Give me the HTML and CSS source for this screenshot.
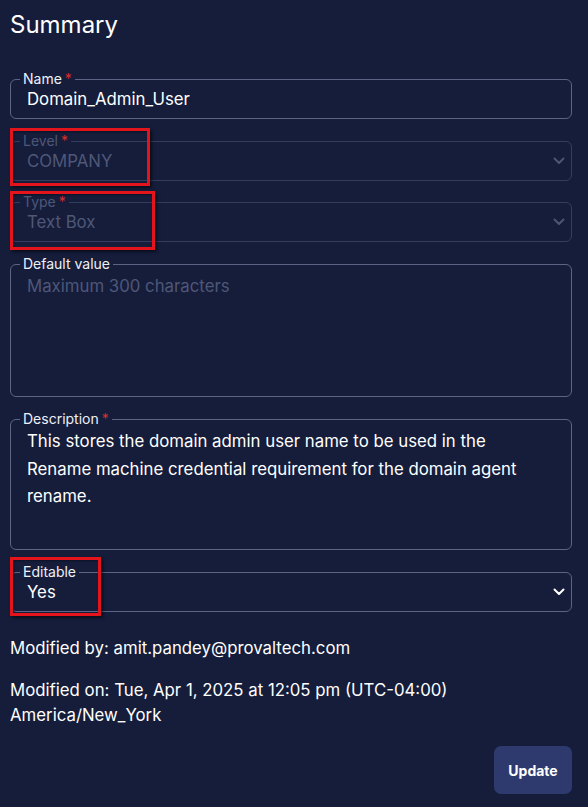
FILE: index.html
```html
<!DOCTYPE html>
<html>
<head>
<meta charset="utf-8">
<link rel="stylesheet" href="styles.css">
</head>
<body>
<div class="page">
  <h1 class="title">Summary</h1>

  <div class="field">
    <fieldset class="box">
      <legend class="label">Name<span class="req">*</span></legend>
      <div class="value">Domain_Admin_User</div>
    </fieldset>
  </div>

  <div class="field">
    <fieldset class="box disabled">
      <legend class="label">Level<span class="req">*</span></legend>
      <div class="select-row">
        <div class="value">COMPANY</div>
        <svg class="chev" width="12" height="8" viewBox="0 0 12 8"><path d="M1.5 1.5 L6 6 L10.5 1.5" fill="none" stroke="currentColor" stroke-width="2" stroke-linecap="round" stroke-linejoin="round"/></svg>
      </div>
    </fieldset>
    <div class="mark mark-level"></div>
  </div>

  <div class="field field-tight">
    <fieldset class="box disabled">
      <legend class="label">Type<span class="req">*</span></legend>
      <div class="select-row">
        <div class="value">Text Box</div>
        <svg class="chev" width="12" height="8" viewBox="0 0 12 8"><path d="M1.5 1.5 L6 6 L10.5 1.5" fill="none" stroke="currentColor" stroke-width="2" stroke-linecap="round" stroke-linejoin="round"/></svg>
      </div>
    </fieldset>
    <div class="mark mark-type"></div>
  </div>

  <div class="field">
    <fieldset class="box area area-default">
      <legend class="label">Default value</legend>
      <div class="placeholder">Maximum 300 characters</div>
    </fieldset>
  </div>

  <div class="field">
    <fieldset class="box area area-desc">
      <legend class="label">Description<span class="req">*</span></legend>
      <div class="text">This stores the domain admin user name to be used in the Rename machine credential requirement for the domain agent rename.</div>
    </fieldset>
  </div>

  <div class="field">
    <fieldset class="box">
      <legend class="label">Editable</legend>
      <div class="select-row">
        <div class="value">Yes</div>
        <svg class="chev chev-on" width="12" height="8" viewBox="0 0 12 8"><path d="M1.5 1.5 L6 6 L10.5 1.5" fill="none" stroke="currentColor" stroke-width="2" stroke-linecap="round" stroke-linejoin="round"/></svg>
      </div>
    </fieldset>
    <div class="mark mark-edit"></div>
  </div>

  <p class="meta meta-by">Modified by: amit.pandey@provaltech.com</p>
  <p class="meta meta-on">Modified on: Tue, Apr 1, 2025 at 12:05 pm (UTC-04:00)<br>America/New_York</p>

  <div class="actions">
    <button class="btn">Update</button>
  </div>
</div>
</body>
</html>
```

FILE: styles.css
```css
html, body {
  margin: 0;
  padding: 0;
  background: #151d3b;
}
body {
  font-family: Inter, "Noto Sans", sans-serif;
  color: #ffffff;
}
.page {
  width: 562px;
  padding: 0 0 0 10px;
}
.title {
  margin: 0;
  padding-top: 10px;
  font-size: 24px;
  line-height: 30px;
  font-weight: 400;
  color: #ffffff;
}
.field {
  position: relative;
  margin-top: 14px;
}
.field-tight {
  margin-top: 13px;
}
.title + .field {
  margin-top: 31px;
}
.box {
  margin: 0;
  min-width: 0;
  border: 1px solid #5c6485;
  border-radius: 6px;
  padding: 0 6px 7px 16px;
}
.label {
  margin-left: -7px;
  padding: 0 3px;
  font-size: 14px;
  line-height: 16px;
  color: #eef0f6;
}
.req {
  color: #d32f2f;
  margin-left: 3px;
}
.value {
  font-size: 16.8px;
  line-height: 24px;
  color: #ffffff;
}
.select-row {
  display: flex;
  align-items: center;
  justify-content: space-between;
}
.chev {
  display: block;
  color: #4d5576;
}
.chev-on {
  color: #ffffff;
}
.disabled {
  border-color: #353d5e;
}
.disabled .label,
.disabled .value {
  color: #4f5778;
}
.area {
  padding-top: 1px;
}
.area-default {
  height: 131px;
}
.area-desc {
  height: 129px;
}
.placeholder {
  font-size: 16.8px;
  line-height: 27.5px;
  color: #4f5778;
}
.text {
  font-size: 16.8px;
  line-height: 27.5px;
  color: #ffffff;
  padding-right: 12px;
}
.mark {
  position: absolute;
  left: 0;
  border: 3px solid #e3141b;
  box-shadow: 2px 2px 3px rgba(0, 0, 0, 0.55), inset 1px 1px 2px rgba(0, 0, 0, 0.4);
  pointer-events: none;
}
.mark-level {
  top: -5px;
  width: 134px;
  height: 52px;
}
.mark-type {
  top: -3px;
  width: 139px;
  height: 53px;
}
.mark-edit {
  top: -7px;
  width: 85px;
  height: 53px;
}
.meta {
  margin: 0;
  font-size: 16.8px;
  line-height: 25px;
  color: #ffffff;
}
.meta-by {
  margin-top: 24px;
}
.meta-on {
  margin-top: 17px;
}
.actions {
  display: flex;
  justify-content: flex-end;
  margin-top: 18px;
}
.btn {
  width: 78px;
  height: 48px;
  border: none;
  border-radius: 7px;
  background: #2e3a6e;
  color: #ffffff;
  font-family: Inter, "Noto Sans", sans-serif;
  font-weight: 700;
  font-size: 14px;
}
```
